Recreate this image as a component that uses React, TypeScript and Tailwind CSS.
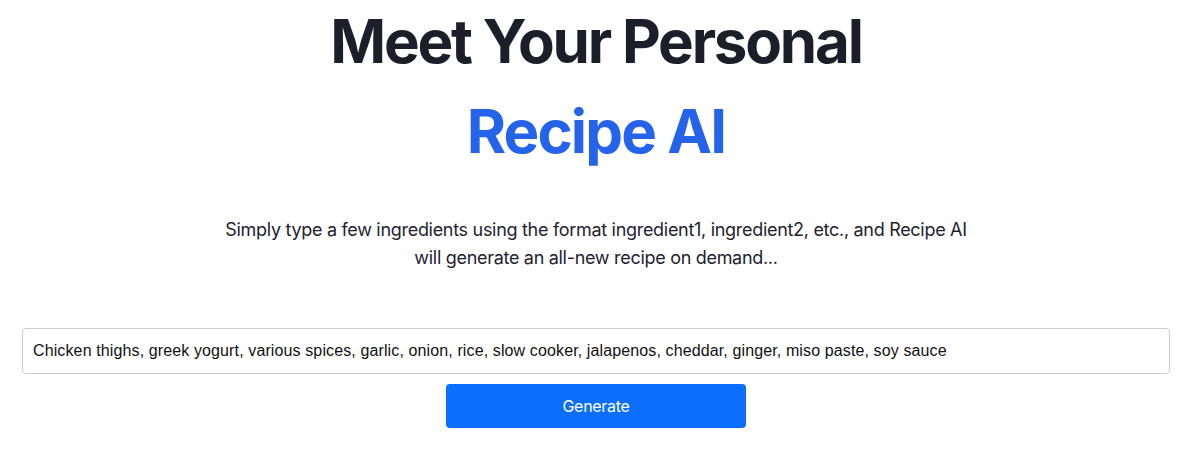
import React from "react";

export default function App() {
  return (
    <div className="min-h-[454px] bg-white pl-[22px] pr-[30px] pt-[11px]" style={{ fontFamily: "Inter, 'Noto Sans', sans-serif" }}>
      <div className="flex flex-col items-center">
        <h1 className="text-center text-[60px] font-bold leading-[60px] tracking-[-2.2px] text-[#1c1f29]">
          Meet Your Personal
          <span className="mt-[30px] block tracking-[-1.9px] text-[#2563eb]">Recipe AI</span>
        </h1>
        <p className="mt-[55px] w-[752px] text-center text-[18px] leading-[28px] tracking-[-0.3px] text-[#1f2230]">
          Simply type a few ingredients using the format ingredient1, ingredient2, etc., and Recipe AI will generate an all-new recipe on demand...
        </p>
      </div>
      <div className="mt-[56px] flex flex-col items-center">
        <input
          type="text"
          readOnly
          value="Chicken thighs, greek yogurt, various spices, garlic, onion, rice, slow cooker, jalapenos, cheddar, ginger, miso paste, soy sauce"
          className="h-[46px] w-full rounded-[4px] border border-[#cccccc] bg-white px-[10px] text-[16px] tracking-[0.12px] text-[#111111] outline-none"
          style={{ fontFamily: "'Liberation Sans', Arial, sans-serif" }}
        />
        <button className="mt-[10px] h-[44px] w-[300px] rounded-[4px] bg-[#0b6efd] text-[16px] tracking-[-0.3px] text-white">
          Generate
        </button>
      </div>
    </div>
  );
}
